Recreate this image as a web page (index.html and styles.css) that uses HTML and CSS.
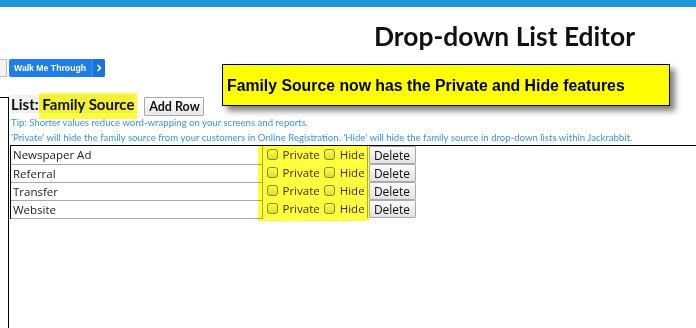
FILE: index.html
```html
<!DOCTYPE html>
<html>
<head>
<meta charset="utf-8">
<link rel="stylesheet" href="styles.css">
</head>
<body>
<div class="topbar"></div>
<header class="header">
  <h1 class="title">Drop-down List Editor</h1>
</header>
<div class="toolbar">
  <span class="stub-btn"></span>
  <button class="walk-btn"><span class="walk-label">Walk Me Through</span><span class="walk-arrow"><svg width="6" height="8" viewBox="0 0 6 8"><path d="M1.5 1 L4.5 4 L1.5 7" fill="none" stroke="#fff" stroke-width="1.6"/></svg></span></button>
</div>
<div class="main">
  <aside class="sidebar"></aside>
  <section class="content">
    <div class="list-row">
      <h2 class="list-title">List: <span class="marker">Family Source</span></h2>
      <button class="add-btn">Add Row</button>
    </div>
    <p class="tip">Tip: Shorter values reduce word-wrapping on your screens and reports.</p>
    <p class="tip">'Private' will hide the family source from your customers in Online Registration. 'Hide' will hide the family source in drop-down lists within Jackrabbit.</p>
    <div class="grid-wrap">
      <table class="grid">
        <tr><td class="name">Newspaper Ad</td><td class="flags"><label><span class="cb"></span>Private</label><label><span class="cb"></span>Hide</label></td><td class="act"><button class="del-btn">Delete</button></td></tr>
        <tr><td class="name">Referral</td><td class="flags"><label><span class="cb"></span>Private</label><label><span class="cb"></span>Hide</label></td><td class="act"><button class="del-btn">Delete</button></td></tr>
        <tr><td class="name">Transfer</td><td class="flags"><label><span class="cb"></span>Private</label><label><span class="cb"></span>Hide</label></td><td class="act"><button class="del-btn">Delete</button></td></tr>
        <tr><td class="name">Website</td><td class="flags"><label><span class="cb"></span>Private</label><label><span class="cb"></span>Hide</label></td><td class="act"><button class="del-btn">Delete</button></td></tr>
      </table>
      <div class="col-marker"></div>
    </div>
  </section>
</div>
<div class="callout">Family Source now has the Private and Hide features</div>
</body>
</html>
```
FILE: styles.css
```css
* { box-sizing: border-box; }
html, body { margin: 0; padding: 0; background: #fff; height: 100%; overflow: hidden; }
body { font-family: Lato, "Open Sans", sans-serif; color: #111; position: relative; }

.topbar { height: 7px; background: #1e98d4; }

.header { display: flex; justify-content: flex-end; padding: 13px 61px 0 0; }
.title { margin: 0; font: 700 26.4px/32px Lato, sans-serif; color: #111; }

.toolbar { display: flex; align-items: center; gap: 2px; margin-top: 7px; height: 18px; }
.stub-btn { width: 7px; height: 18px; border: 1px solid #bbb; border-left: none; background: #f4f4f4; }
.walk-btn { display: flex; align-items: stretch; height: 18px; padding: 0; border: none; border-radius: 2px; background: #1f7fe6; color: #fff; overflow: hidden; }
.walk-label { display: flex; align-items: center; padding: 0 5px 0 5px; font: 700 8.7px "Liberation Sans", Arial, sans-serif; width: 83px; }
.walk-arrow { display: flex; align-items: center; justify-content: center; width: 13px; background: #1a73d9; border-left: 1px solid #3b8ee8; }

.main { display: flex; margin-top: 20px; height: 240px; }
.sidebar { width: 9px; flex: none; border-top: 1px solid #000; border-right: 1px solid #000; }
.content { flex: 1; padding-left: 1px; }

.list-row { display: flex; align-items: center; height: 22px; margin-top: -4px; padding-left: 1px; }
.list-title { margin: 0; font: 700 15px/18px Lato, sans-serif; color: #111; background: #f0f0f0; }
.marker { position: relative; }
.marker::after { content: ""; position: absolute; left: -3px; right: -3px; top: -2px; bottom: -6px; background: #ffff40; mix-blend-mode: multiply; }
.add-btn { margin: 5px 0 0 10px; height: 19px; width: 60px; padding: 0; border: 1px solid #aaa; border-radius: 1px; background: linear-gradient(#fff, #e8e8e8); font: 700 12.5px Lato, sans-serif; color: #111; }

.tip { margin: 0; padding-left: 1px; font: 400 9.6px/15px Lato, sans-serif; color: #3d93d8; white-space: nowrap; }

.grid-wrap { position: relative; border-top: 1px solid #000; border-left: 1px solid #000; }
.grid { border-collapse: collapse; font: 400 11.5px "Open Sans", sans-serif; }
.grid td { height: 18px; padding: 0; }
.grid td.name { width: 251px; border: 1px solid #aaa; border-top: none; border-left: none; padding-left: 2px; color: #222; }
.grid td.flags { width: 105px; border-right: 1px solid #aaa; padding-left: 4px; white-space: nowrap; }
.grid td.act { padding: 0 0 0 1px; }
.flags label { display: inline-flex; align-items: center; color: #4a2a10; font: 400 11.5px "Open Sans", sans-serif; }
.flags label + label { margin-left: 4px; }
.cb { display: inline-block; width: 11px; height: 11px; border: 1px solid #8a8a8a; border-radius: 3px; background: linear-gradient(#fdfdfd, #dcdcdc); margin-right: 5px; }
.del-btn { display: block; width: 47px; height: 18px; padding: 0; border: 1px solid #aaa; border-radius: 1px; background: linear-gradient(#fafafa, #e2e2e2); font: 400 12px "Open Sans", sans-serif; color: #111; }

.col-marker { position: absolute; left: 247px; top: 0; width: 111px; height: 75px; background: #ffff40; mix-blend-mode: multiply; pointer-events: none; }

.callout { position: absolute; left: 222px; top: 64px; width: 448px; height: 42px; background: #ffff00; border: 1px solid #000; box-shadow: 5px 5px 6px rgba(0,0,0,0.5); padding: 12px 0 0 4px; font: 700 15.8px "Liberation Sans", Arial, sans-serif; color: #000; }
```
